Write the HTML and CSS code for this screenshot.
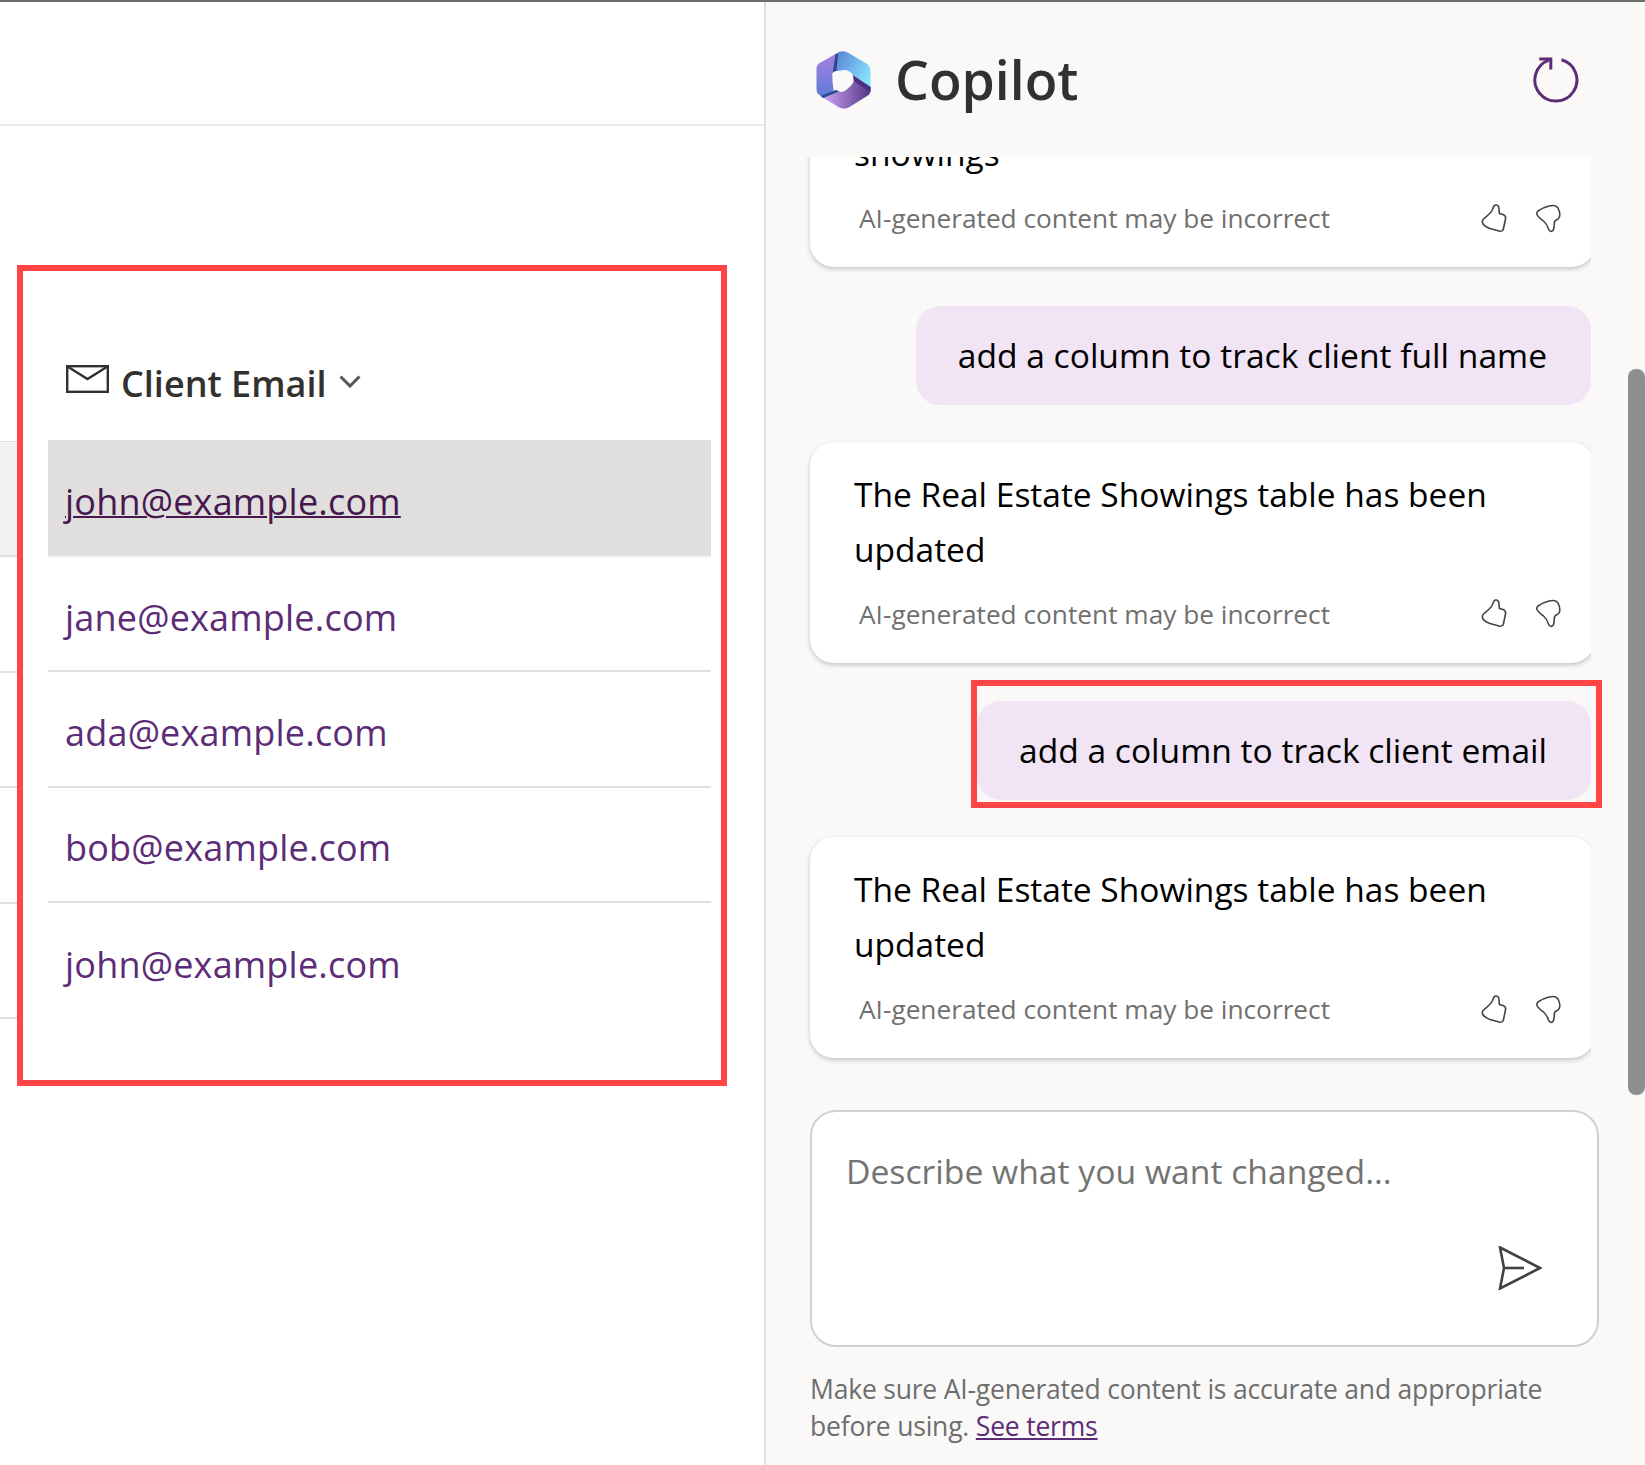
FILE: index.html
```html
<!DOCTYPE html>
<html lang="en">
<head>
    <meta charset="UTF-8">
    <meta name="viewport" content="width=device-width, initial-scale=1.0">
    <title>Copilot - Client Email</title>
    <link rel="stylesheet" href="styles.css">
</head>
<body>
    <div class="app">
        <main class="grid-pane">
            <div class="toolbar"></div>
            <div class="grid-rows">
                <div class="grid-row grid-row-active"></div>
                <div class="grid-row"></div>
                <div class="grid-row"></div>
                <div class="grid-row"></div>
                <div class="grid-row"></div>
            </div>

            <!-- red callout sits on top of the table -->
            <section class="callout">
                <div class="column-head">
                    <svg class="mail-icon" width="43" height="28" viewBox="0 0 43 28" fill="none" stroke="#323130" stroke-width="2.4">
                        <rect x="1.2" y="1.2" width="40.6" height="25.6"/>
                        <path d="M1.5 1.5 L21.5 14 L41.5 1.5"/>
                    </svg>
                    <span class="column-title">Client Email</span>
                    <svg class="chevron" width="22" height="13" viewBox="0 0 22 13" fill="none" stroke="#555555" stroke-width="3">
                        <path d="M1.5 1.5 L11 11 L20.5 1.5"/>
                    </svg>
                </div>
                <div class="cell cell-active"><a href="#">john@example.com</a></div>
                <div class="cell"><a href="#">jane@example.com</a></div>
                <div class="cell"><a href="#">ada@example.com</a></div>
                <div class="cell"><a href="#">bob@example.com</a></div>
                <div class="cell cell-last"><a href="#">john@example.com</a></div>
            </section>
        </main>

        <aside class="panel">
            <header class="panel-head">
                <svg class="logo" width="57" height="58" viewBox="0 0 56 58">
                    <defs>
                        <linearGradient id="logoLeft" x1="0" y1="0" x2="0" y2="1">
                            <stop offset="0" stop-color="#a97fdc"/>
                            <stop offset="1" stop-color="#5a7dd8"/>
                        </linearGradient>
                        <linearGradient id="logoTop" x1="0" y1="0" x2="1" y2="0.6">
                            <stop offset="0" stop-color="#5478d4"/>
                            <stop offset="1" stop-color="#86e0fa"/>
                        </linearGradient>
                        <linearGradient id="logoBottom" x1="0" y1="0" x2="1" y2="0">
                            <stop offset="0" stop-color="#cda4f4"/>
                            <stop offset="1" stop-color="#553688"/>
                        </linearGradient>
                    </defs>
                    <path d="M20 3 L6 11 C2 13 1 15 1 19 L1 38 C1 41 2 43 4 44 L8 47 L18 40 L17 22 Z" fill="url(#logoLeft)"/>
                    <path d="M20 3 C24 0 28 -1 33 2 L50 12 C54 14 55 17 55 21 L55 36 L37 24 L29 19 L17 22 Z" fill="url(#logoTop)"/>
                    <path d="M55 36 L55 39 C55 42 54 44 50 46 L34 56 C30 58 27 58 23 56 L8 47 L25 40 L38 30 L37 24 Z" fill="url(#logoBottom)"/>
                    <path d="M20 3 L17 22 L21 20 L22.5 3 Z" fill="#33438f"/>
                    <path d="M37 24 L55 36 L55 41 L38 30 Z" fill="#4b3184"/>
                    <path d="M8 47 L25 40 L28 36 L5 45 Z" fill="#2e4a94"/>
                    <path d="M17 24 C17 21 19 20 22 20 L30 19 C35 20 38 23 38 28 L38 31 C36 35 29 41 26 41 C20 40 17 36 17 30 Z" fill="#faf9f8"/>
                </svg>
                <h1 class="panel-title">Copilot</h1>
                <svg class="refresh" width="48" height="48" viewBox="0 0 48 48" fill="none" stroke="#5c2d76" stroke-width="3">
                    <path d="M29.5 3.8 A21 21 0 1 1 17 4.2"/>
                    <path d="M7.3 3 L18.8 3 L18.8 13.5"/>
                </svg>
            </header>

            <div class="messages">
                <div class="bot-card bot-card-first">
                    <p class="bot-text">showings</p>
                    <div class="bot-foot">
                        <span class="ai-note">AI-generated content may be incorrect</span>
                        <svg class="thumb" width="27" height="29" viewBox="0 0 27 29" fill="none" stroke="#424242" stroke-width="1.6"><path d="M13 2 C14 .5 16.5 .7 17.5 2.5 C18.5 5 17.8 7.5 18.5 9.5 L22 10.5 C24.5 11.5 25 13 24.5 15 L22.5 24.5 C22 27 20 27.5 18 27 L9 24.5 C6 23.5 3 21.5 1.8 19.5 C.8 17.5 1.2 16 3 14.5 C6 12 9.5 9.5 11 6.5 Z"/></svg>
                        <svg class="thumb" width="27" height="29" viewBox="0 0 27 29" fill="none" stroke="#424242" stroke-width="1.6"><path d="M2 7 C4 5.5 9 3 13 2 C17 1 20.5 1.5 22 4 C24 8 24.5 12 22.5 14.5 C21 16 19 16 18.5 18 C18 21 18.5 24 17 26.5 C15.5 28 13.5 27.5 12.5 25 C11.5 22 10 19 7.5 17 C5 15 2 13 1 10.5 C.5 9 1 8 2 7 Z"/></svg>
                    </div>
                </div>

                <div class="user-bubble">add a column to track client full name</div>

                <div class="bot-card">
                    <p class="bot-text">The Real Estate Showings table has been updated</p>
                    <div class="bot-foot">
                        <span class="ai-note">AI-generated content may be incorrect</span>
                        <svg class="thumb" width="27" height="29" viewBox="0 0 27 29" fill="none" stroke="#424242" stroke-width="1.6"><path d="M13 2 C14 .5 16.5 .7 17.5 2.5 C18.5 5 17.8 7.5 18.5 9.5 L22 10.5 C24.5 11.5 25 13 24.5 15 L22.5 24.5 C22 27 20 27.5 18 27 L9 24.5 C6 23.5 3 21.5 1.8 19.5 C.8 17.5 1.2 16 3 14.5 C6 12 9.5 9.5 11 6.5 Z"/></svg>
                        <svg class="thumb" width="27" height="29" viewBox="0 0 27 29" fill="none" stroke="#424242" stroke-width="1.6"><path d="M2 7 C4 5.5 9 3 13 2 C17 1 20.5 1.5 22 4 C24 8 24.5 12 22.5 14.5 C21 16 19 16 18.5 18 C18 21 18.5 24 17 26.5 C15.5 28 13.5 27.5 12.5 25 C11.5 22 10 19 7.5 17 C5 15 2 13 1 10.5 C.5 9 1 8 2 7 Z"/></svg>
                    </div>
                </div>

                <div class="user-bubble">add a column to track client email</div>

                <div class="bot-card">
                    <p class="bot-text">The Real Estate Showings table has been updated</p>
                    <div class="bot-foot">
                        <span class="ai-note">AI-generated content may be incorrect</span>
                        <svg class="thumb" width="27" height="29" viewBox="0 0 27 29" fill="none" stroke="#424242" stroke-width="1.6"><path d="M13 2 C14 .5 16.5 .7 17.5 2.5 C18.5 5 17.8 7.5 18.5 9.5 L22 10.5 C24.5 11.5 25 13 24.5 15 L22.5 24.5 C22 27 20 27.5 18 27 L9 24.5 C6 23.5 3 21.5 1.8 19.5 C.8 17.5 1.2 16 3 14.5 C6 12 9.5 9.5 11 6.5 Z"/></svg>
                        <svg class="thumb" width="27" height="29" viewBox="0 0 27 29" fill="none" stroke="#424242" stroke-width="1.6"><path d="M2 7 C4 5.5 9 3 13 2 C17 1 20.5 1.5 22 4 C24 8 24.5 12 22.5 14.5 C21 16 19 16 18.5 18 C18 21 18.5 24 17 26.5 C15.5 28 13.5 27.5 12.5 25 C11.5 22 10 19 7.5 17 C5 15 2 13 1 10.5 C.5 9 1 8 2 7 Z"/></svg>
                    </div>
                </div>
            </div>

            <div class="composer">
                <span class="placeholder">Describe what you want changed...</span>
                <svg class="send" width="44" height="44" viewBox="0 0 44 44" fill="none" stroke="#424242" stroke-width="2.6">
                    <path d="M2 1.5 L42 22 L2 42.5 L6 22 Z"/>
                    <path d="M6 22 L26 22"/>
                </svg>
            </div>
            <p class="disclaimer">Make sure AI-generated content is accurate and appropriate before using. <a href="#">See terms</a></p>

            <div class="scrollbar"></div>
            <div class="bubble-outline"></div>
        </aside>
    </div>
</body>
</html>
```

FILE: styles.css
```css
* {
    box-sizing: border-box;
}
body {
    margin: 0;
    height: 1465px;
    overflow: hidden;
    background: #fff;
    font-family: "Open Sans", "Noto Sans", sans-serif;
    color: #323130;
}
a {
    color: #5c2d76;
    text-decoration: none;
}
.app {
    display: flex;
    height: 1465px;
    border-top: 2px solid #6e6e6e;
}

/* left side: table */
.grid-pane {
    position: relative;
    width: 766px;
    border-right: 2px solid #e1dfdd;
}
.toolbar {
    height: 124px;
    border-bottom: 2px solid #edebe9;
}
.grid-rows {
    width: 600px;
    margin-top: 315px;
    border-top: 1px solid #e1dfdd;
}
.grid-row {
    height: 115.4px;
    border-bottom: 2px solid #e1dfdd;
}
.grid-row-active {
    background: #f3f2f1;
}

.callout {
    position: absolute;
    left: 17px;
    top: 263px;
    width: 710px;
    height: 821px;
    padding: 0 10px 0 25px;
    background: #fff;
    border: 6px solid #ff4545;
}
.column-head {
    display: flex;
    align-items: center;
    height: 169px;
    padding: 56px 0 0 18px;
}
.mail-icon {
    flex: none;
    margin-top: -10px;
}
.column-title {
    margin-left: 12px;
    font-size: 36px;
    font-weight: 600;
    white-space: nowrap;
}
.chevron {
    flex: none;
    margin-left: 12px;
    margin-top: -4px;
}
.cell {
    display: flex;
    align-items: center;
    height: 115.4px;
    padding: 7px 0 0 17px;
    border-bottom: 2px solid #e1dfdd;
    font-size: 36px;
    letter-spacing: 0.2px;
}
.cell-active {
    height: 117px;
    padding-top: 8px;
    background: #e0dfdd;
    border-bottom-color: #edebe9;
}
.cell-active a {
    color: #47184f;
    text-decoration: underline;
    text-decoration-thickness: 2px;
}
.cell-last {
    border-bottom: none;
}

/* right side: copilot panel */
.panel {
    position: relative;
    flex: 1;
    display: flex;
    flex-direction: column;
    background: #faf9f8;
}
.panel-head {
    display: flex;
    align-items: center;
    flex: none;
    height: 155px;
    padding: 0 65px 0 49px;
}
.logo {
    flex: none;
}
.panel-title {
    flex: 1;
    margin: 0 0 0 23px;
    font-size: 53.5px;
    font-weight: 600;
}
.refresh {
    flex: none;
}

.messages {
    flex: none;
    display: flex;
    flex-direction: column;
    align-items: flex-end;
    height: 938px;
    width: 825px;
    padding: 0 0 0 34px;
    overflow: hidden;
}
.bot-card {
    flex: none;
    width: 785px;
    margin-right: -4px;
    margin-bottom: 38.5px;
    padding: 25px 32px 29px 44px;
    background: #fff;
    border-radius: 24px;
    box-shadow: 0 2px 5px rgba(0, 0, 0, 0.22);
}
.bot-card-first {
    margin-top: -56px;
}
.bot-text {
    margin: 0;
    font-size: 33.5px;
    line-height: 55px;
    color: #000;
}
.bot-foot {
    display: flex;
    align-items: center;
    gap: 25px;
    height: 40px;
    margin-top: 17px;
}
.thumb + .thumb {
    margin-left: 3px;
}
.ai-note {
    flex: 1;
    padding-left: 5px;
    font-size: 26.25px;
    color: #707070;
}
.user-bubble {
    flex: none;
    margin-bottom: 37px;
    padding: 0 44px 0 42px;
    height: 99px;
    line-height: 99px;
    background: #f1e4f4;
    border-radius: 24px;
    font-size: 33.6px;
    color: #000;
    white-space: nowrap;
}

.composer {
    flex: none;
    position: relative;
    width: 789px;
    height: 237px;
    margin: 15px 0 0 44px;
    padding: 36px 34px;
    background: #fff;
    border: 2px solid #d1d1d1;
    border-radius: 26px;
}
.placeholder {
    font-size: 33.7px;
    color: #737373;
}
.send {
    position: absolute;
    right: 55px;
    bottom: 55px;
}
.disclaimer {
    margin: 24px 0 0 44px;
    width: 780px;
    font-size: 26.5px;
    line-height: 37px;
    color: #6e6e6e;
    letter-spacing: -0.2px;
}
.disclaimer a {
    text-decoration: underline;
}

.scrollbar {
    position: absolute;
    left: 862px;
    top: 367px;
    width: 17px;
    height: 726px;
    background: #8f8f8f;
    border-radius: 8px;
}
.bubble-outline {
    position: absolute;
    left: 205px;
    top: 678px;
    width: 631px;
    height: 128px;
    border: 6px solid #ff4545;
}
```
